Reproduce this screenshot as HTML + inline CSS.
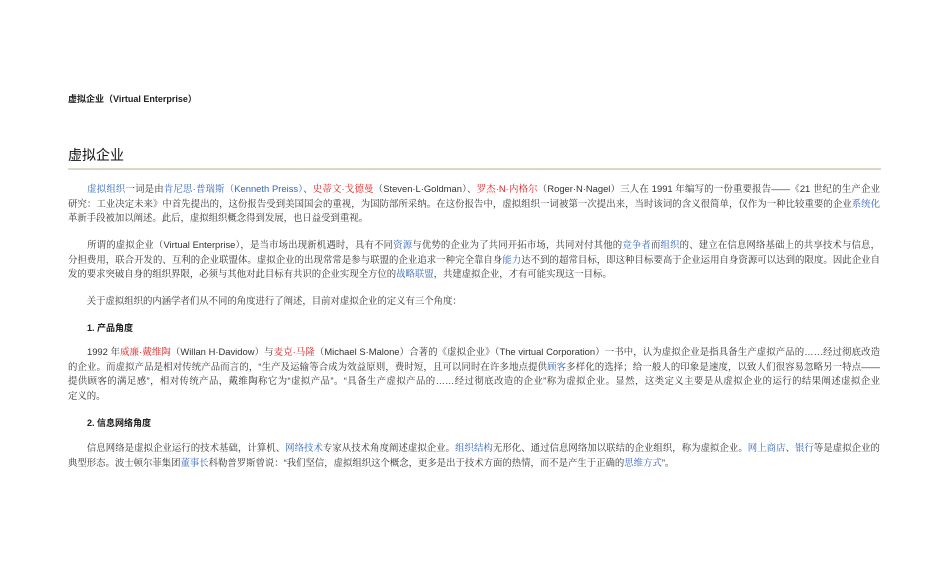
<!DOCTYPE html>
<html><head><meta charset="utf-8"><style>
body{margin:0;width:950px;height:577px;background:#fff;position:relative;overflow:hidden;color:#333;}
.t{position:absolute;left:68px;font-family:"Liberation Sans","Noto Sans CJK SC",sans-serif;font-weight:bold;font-size:9px;color:#222;}
.h{position:absolute;left:68px;top:145px;font-family:"Liberation Sans","Noto Sans CJK SC",sans-serif;font-size:14px;color:#111;}
.rule{position:absolute;left:68px;top:168px;width:813px;height:2px;background:#dcd8c4;}
.p{position:absolute;left:68px;width:812px;font-family:"Liberation Sans","Noto Serif CJK SC",serif;font-size:9.4px;color:#333;}
.l{height:14.5px;line-height:14.5px;white-space:nowrap;text-align:justify;text-align-last:justify;overflow:hidden;}
.e{text-align-last:left;}
a{color:#3366bb;text-decoration:none}
.r{color:#dd2222}
</style></head><body>
<div class="t" style="top:92px">虚拟企业（Virtual Enterprise）</div>
<div class="h">虚拟企业</div>
<div class="rule"></div>
<div class="p" style="top:182px">
<div class="l">　　<a>虚拟组织</a>一词是由<a>肯尼思·普瑞斯（Kenneth Preiss）</a>、<span class="r">史蒂文·戈德曼</span>（Steven·L·Goldman）、<span class="r">罗杰·N·内格尔</span>（Roger·N·Nagel）三人在 1991 年编写的一份重要报告——《21 世纪的生产企业</div>
<div class="l">研究：工业决定未来》中首先提出的，这份报告受到美国国会的重视，为国防部所采纳。在这份报告中，虚拟组织一词被第一次提出来，当时该词的含义很简单，仅作为一种比较重要的企业<a>系统化</a></div>
<div class="l e">革新手段被加以阐述。此后，虚拟组织概念得到发展，也日益受到重视。</div>
</div>
<div class="p" style="top:238px">
<div class="l">　　所谓的虚拟企业（Virtual Enterprise），是当市场出现新机遇时，具有不同<a>资源</a>与优势的企业为了共同开拓市场，共同对付其他的<a>竞争者</a>而<a>组织</a>的、建立在信息网络基础上的共享技术与信息，</div>
<div class="l">分担费用，联合开发的、互利的企业联盟体。虚拟企业的出现常常是参与联盟的企业追求一种完全靠自身<a>能力</a>达不到的超常目标，即这种目标要高于企业运用自身资源可以达到的限度。因此企业自</div>
<div class="l e">发的要求突破自身的组织界限，必须与其他对此目标有共识的企业实现全方位的<a>战略联盟</a>，共建虚拟企业，才有可能实现这一目标。</div>
</div>
<div class="p" style="top:294px"><div class="l e">　　关于虚拟组织的内涵学者们从不同的角度进行了阐述，目前对虚拟企业的定义有三个角度：</div></div>
<div class="t" style="top:321px;left:87px">1. 产品角度</div>
<div class="p" style="top:345px">
<div class="l">　　1992 年<span class="r">威廉·戴维陶</span>（Willan H·Davidow）与<span class="r">麦克·马隆</span>（Michael S·Malone）合著的《虚拟企业》（The virtual Corporation）一书中，认为虚拟企业是指具备生产虚拟产品的……经过彻底改造</div>
<div class="l">的企业。而虚拟产品是相对传统产品而言的，“生产及运输等合成为效益原则，费时短，且可以同时在许多地点提供<a>顾客</a>多样化的选择；给一般人的印象是速度，以致人们很容易忽略另一特点——</div>
<div class="l">提供顾客的满足感”，相对传统产品，戴维陶称它为“虚拟产品”。“具备生产虚拟产品的……经过彻底改造的企业”称为虚拟企业。显然，这类定义主要是从虚拟企业的运行的结果阐述虚拟企业</div>
<div class="l e">定义的。</div>
</div>
<div class="t" style="top:416px;left:87px">2. 信息网络角度</div>
<div class="p" style="top:441px">
<div class="l">　　信息网络是虚拟企业运行的技术基础，计算机、<a>网络技术</a>专家从技术角度阐述虚拟企业。<a>组织结构</a>无形化、通过信息网络加以联结的企业组织，称为虚拟企业。<a>网上商店</a>、<a>银行</a>等是虚拟企业的</div>
<div class="l e">典型形态。波士顿尔菲集团<a>董事长</a>科勒普罗斯曾说：“我们坚信，虚拟组织这个概念，更多是出于技术方面的热情，而不是产生于正确的<a>思维方式</a>”。</div>
</div>
</body></html>
